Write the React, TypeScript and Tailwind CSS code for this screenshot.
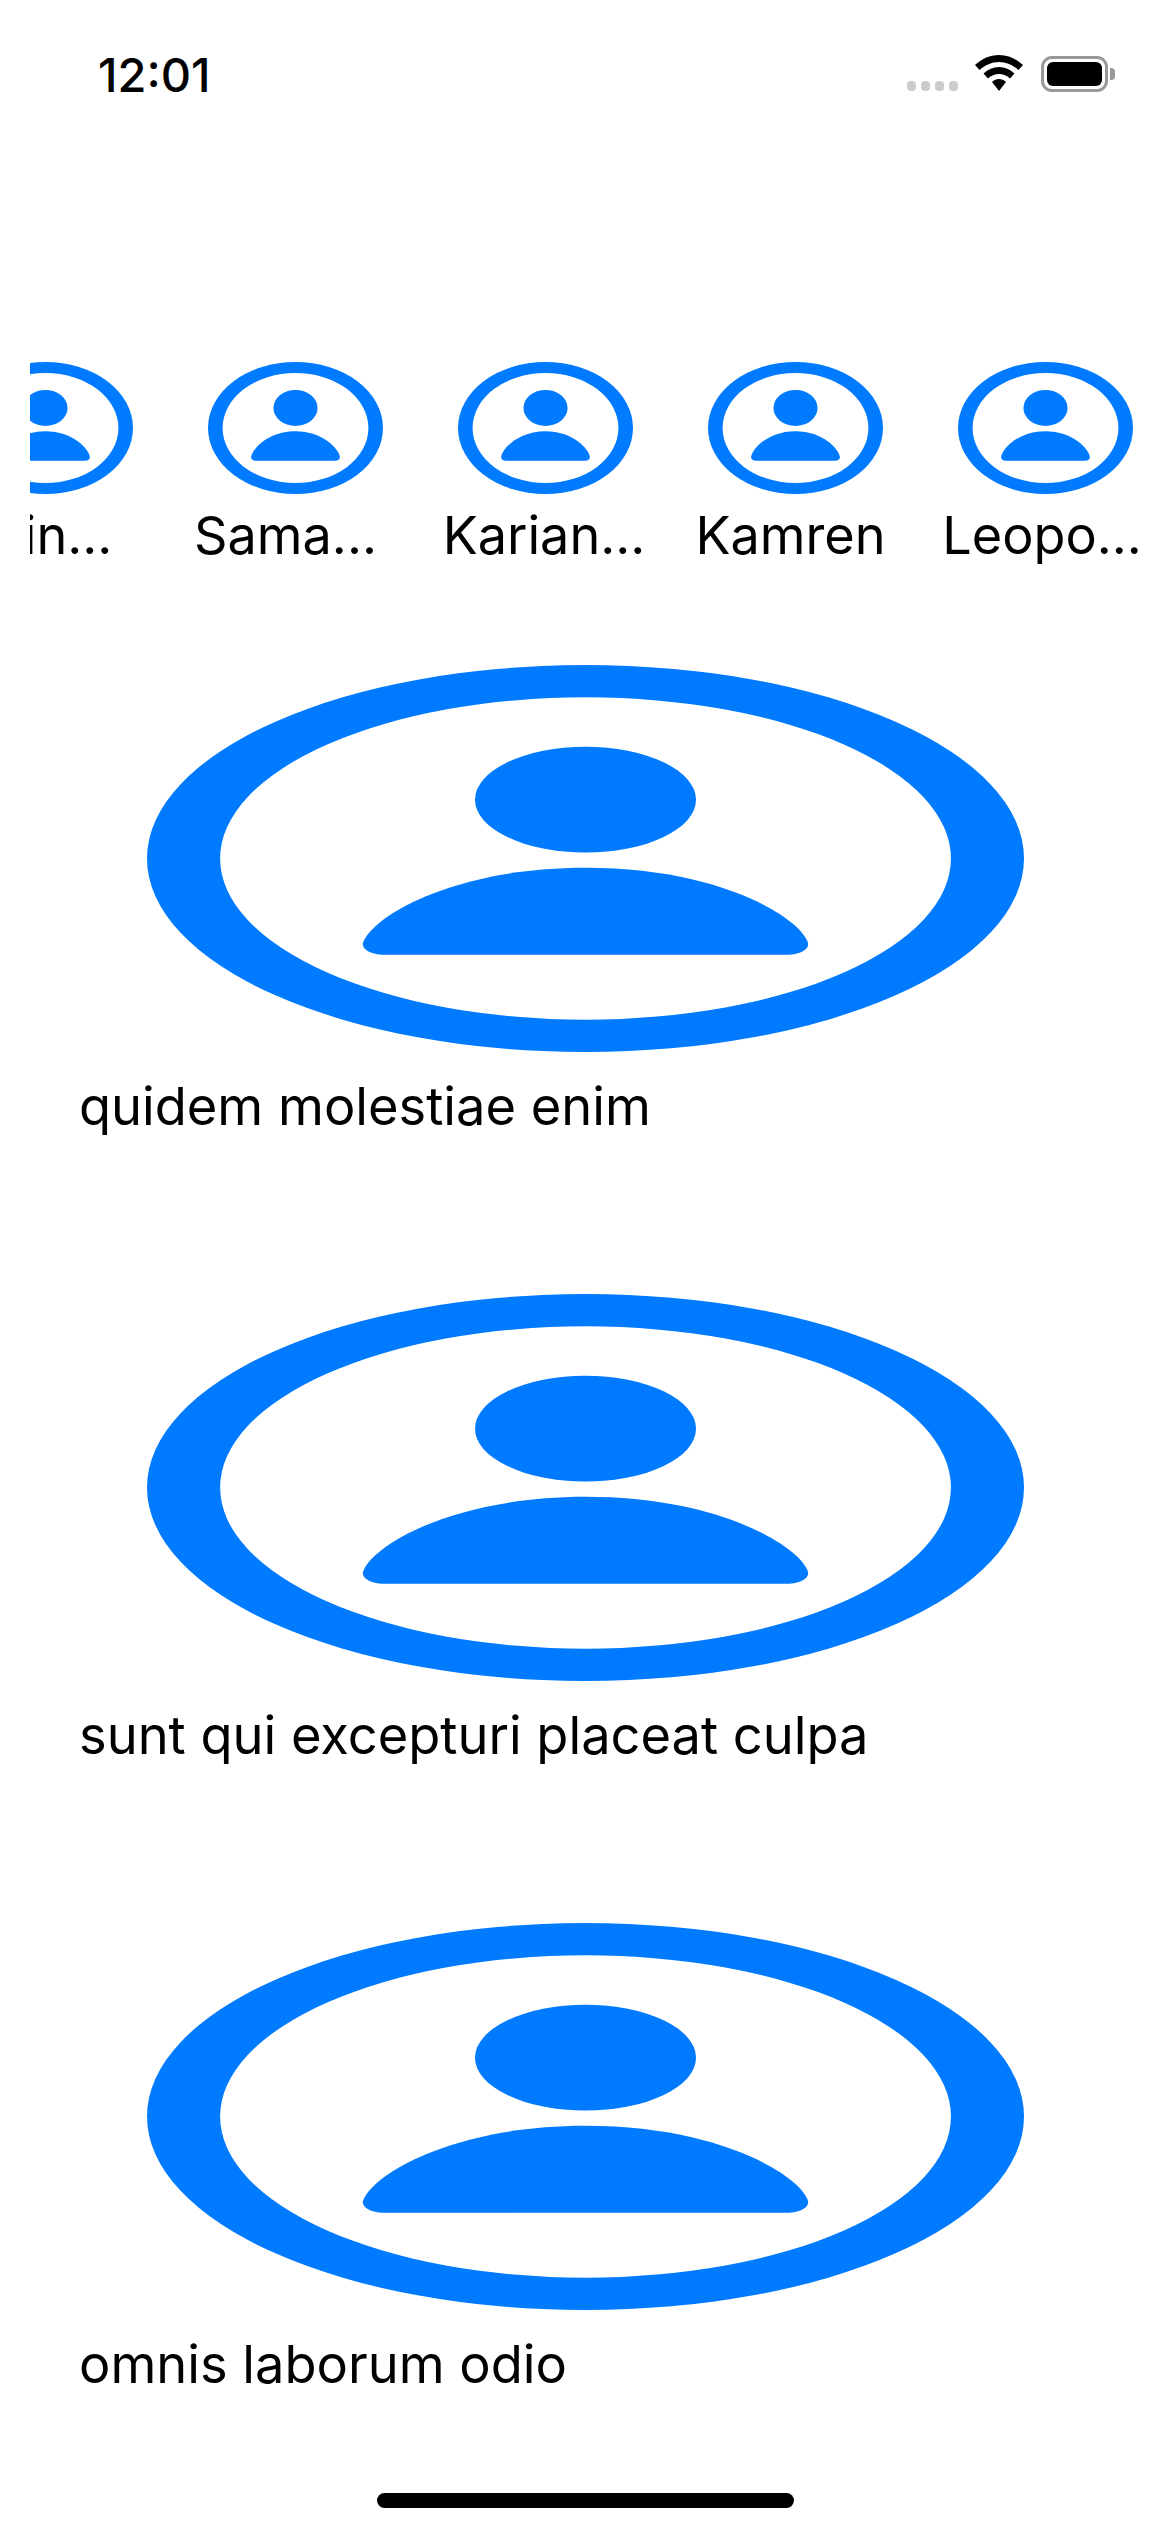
const people = [
  { name: "Ervin...", shift: "pr-[36px]" },
  { name: "Sama...", shift: "pr-[20px]" },
  { name: "Karian...", shift: "pr-[3px]" },
  { name: "Kamren", shift: "pr-[10px]" },
  { name: "Leopo...", shift: "pr-[7px]" },
];

const posts = [
  "quidem molestiae enim",
  "sunt qui excepturi placeat culpa",
  "omnis laborum odio",
];

// person.crop.circle, stretched to whatever box it gets
function PersonIcon({ className }: { className: string }) {
  return (
    <svg viewBox="0 0 100 100" preserveAspectRatio="none" className={className} fill="#007aff">
      <path
        fillRule="evenodd"
        d="M50 0a50 50 0 1 0 0 100a50 50 0 1 0 0-100ZM50 8.35a41.65 41.65 0 1 1 0 83.3a41.65 41.65 0 1 1 0-83.3Z"
      />
      <ellipse cx="50" cy="34.8" rx="12.6" ry="13.66" />
      <path d="M27.4 74.9H72.6C74.3 74.9 75.4 73.8 75.4 72C74.6 65.500 65.500 52.4 50 52.4C34.500 52.4 25.400 65.500 24.600 72C24.600 73.8 25.7 74.9 27.4 74.9Z" />
    </svg>
  );
}

export default function App() {
  return (
    <div className="w-[1170px] h-[2532px] bg-white text-black flex flex-col font-['Inter',sans-serif]">
      {/* Status bar */}
      <div className="h-[362px] shrink-0">
        <div className="flex items-start justify-between pt-[47px] pl-[98px] pr-[55px]">
          <span className="text-[47px] leading-[56px] font-[550]">12:01</span>
          <div className="flex items-end pt-[8px]">
            <div className="flex gap-[5px] mb-[1px]">
              <div className="w-[9px] h-[10px] rounded-[4px] bg-[#cccccc]" />
              <div className="w-[9px] h-[10px] rounded-[4px] bg-[#cccccc]" />
              <div className="w-[9px] h-[10px] rounded-[4px] bg-[#cccccc]" />
              <div className="w-[9px] h-[10px] rounded-[4px] bg-[#cccccc]" />
            </div>
            <svg viewBox="0 0 48 36" className="w-[48px] h-[36px] ml-[17px] mb-[1px]" fill="black">
              <path d="M24 0C15 0 7 3.500 0 10L4.500 15C10 10 17 7 24 7C31 7 38 10 43.500 15L48 10C41 3.500 33 0 24 0Z" />
              <path d="M24 12C18 12 13 14.300 8.500 18.500L13 23.500C16 20.700 20 19 24 19C28 19 32 20.700 35 23.500L39.500 18.500C35 14.300 30 12 24 12Z" />
              <path d="M24 24C21.500 24 19 25 17 27L24 36L31 27C29 25 26.500 24 24 24Z" />
            </svg>
            <div className="ml-[18px] w-[67px] h-[36px] border-[3px] border-[#999999] rounded-[11px] p-[3px]">
              <div className="w-full h-full bg-black rounded-[6px]" />
            </div>
            <div className="w-[5px] h-[12px] bg-[#999999] rounded-r-[4px] ml-[2px] mb-[12px]" />
          </div>
        </div>
      </div>

      {/* Horizontal people strip */}
      <div className="mx-[30px] overflow-hidden shrink-0">
        <div className="flex gap-[75px] ml-[-72px] w-max">
          {people.map((p) => (
            <div key={p.name} className="w-[175px] flex flex-col items-center">
              <PersonIcon className="w-[175px] h-[132px]" />
              <div className="w-full flex justify-center mt-[9px]">
                <span className={`text-[52.2px] leading-[64px] whitespace-nowrap ${p.shift}`}>
                  {p.name}
                </span>
              </div>
            </div>
          ))}
        </div>
      </div>

      {/* Post list */}
      <div className="flex flex-col gap-[157px] mt-[98px]">
        {posts.map((title) => (
          <div key={title}>
            <div className="flex justify-center">
              <PersonIcon className="w-[877px] h-[387px]" />
            </div>
            <div className="pl-[79px] mt-[23px] h-[62px] text-[52.4px] leading-[62px]">{title}</div>
          </div>
        ))}
      </div>

      {/* Home indicator */}
      <div className="mt-auto pb-[24px] flex justify-center">
        <div className="w-[417px] h-[15px] rounded-full bg-black" />
      </div>
    </div>
  );
}
